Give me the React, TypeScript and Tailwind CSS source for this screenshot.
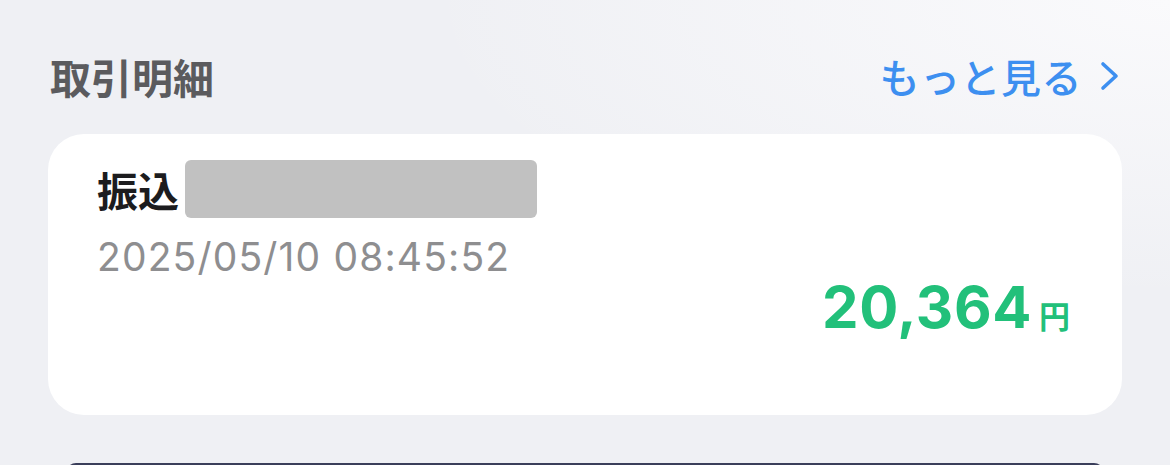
import React from "react";

export default function App() {
  const jp = { fontFamily: '"Noto Sans CJK JP", "Noto Sans", sans-serif' };
  const num = { fontFamily: 'Inter, "Noto Sans CJK JP", sans-serif' };
  return (
    <div className="w-[1170px] h-[465px] overflow-hidden bg-[#eff0f4] relative">
      <div className="absolute inset-0 pointer-events-none bg-[radial-gradient(ellipse_at_top_right,#fafafc_0%,rgba(239,240,244,0)_45%)]" />
      <div className="relative flex flex-col px-[48px]">
        <div className="flex items-start justify-between h-[134px] pt-[56px]">
          <div className="text-[41px] leading-none font-semibold text-[#5b5b5e] pl-[2px]" style={jp}>
            取引明細
          </div>
          <div className="flex items-center text-[#3d8ff0]">
            <span className="text-[40px] leading-none font-medium tracking-[0.5px]" style={jp}>もっと見る</span>
            <svg width="22" height="30" viewBox="0 0 22 30" className="ml-[17px] mr-[1px]">
              <path d="M4 3 L17 15 L4 27" fill="none" stroke="#3d8ff0" strokeWidth="3.6" strokeLinecap="round" strokeLinejoin="round" />
            </svg>
          </div>
        </div>
        <div className="bg-white rounded-[36px] h-[281px] flex flex-col pl-[49px] pr-[49px] pt-[26px]">
          <div className="flex items-center h-[58px]">
            <span className="text-[41px] leading-none font-bold text-[#1c1c1e]" style={jp}>振込</span>
            <div className="ml-[6px] w-[352px] h-[58px] rounded-[6px] bg-[#c1c1c1]" />
          </div>
          <div className="mt-[19px] text-[39px] leading-none text-[#8e8e90] tracking-[1.15px]" style={num}>
            2025/05/10 08:45:52
          </div>
          <div className="flex justify-end items-baseline mt-[2px]">
            <span className="text-[58px] leading-none font-bold text-[#22c07a] tracking-[0.6px]" style={num}>20,364</span>
            <span className="ml-[7px] mr-[3px] text-[31px] leading-none font-bold text-[#22c07a]" style={jp}>円</span>
          </div>
        </div>
        <div className="mt-[48px] mx-[18px] h-[10px] rounded-t-[12px] bg-[#3a3e5a]" />
      </div>
    </div>
  );
}
